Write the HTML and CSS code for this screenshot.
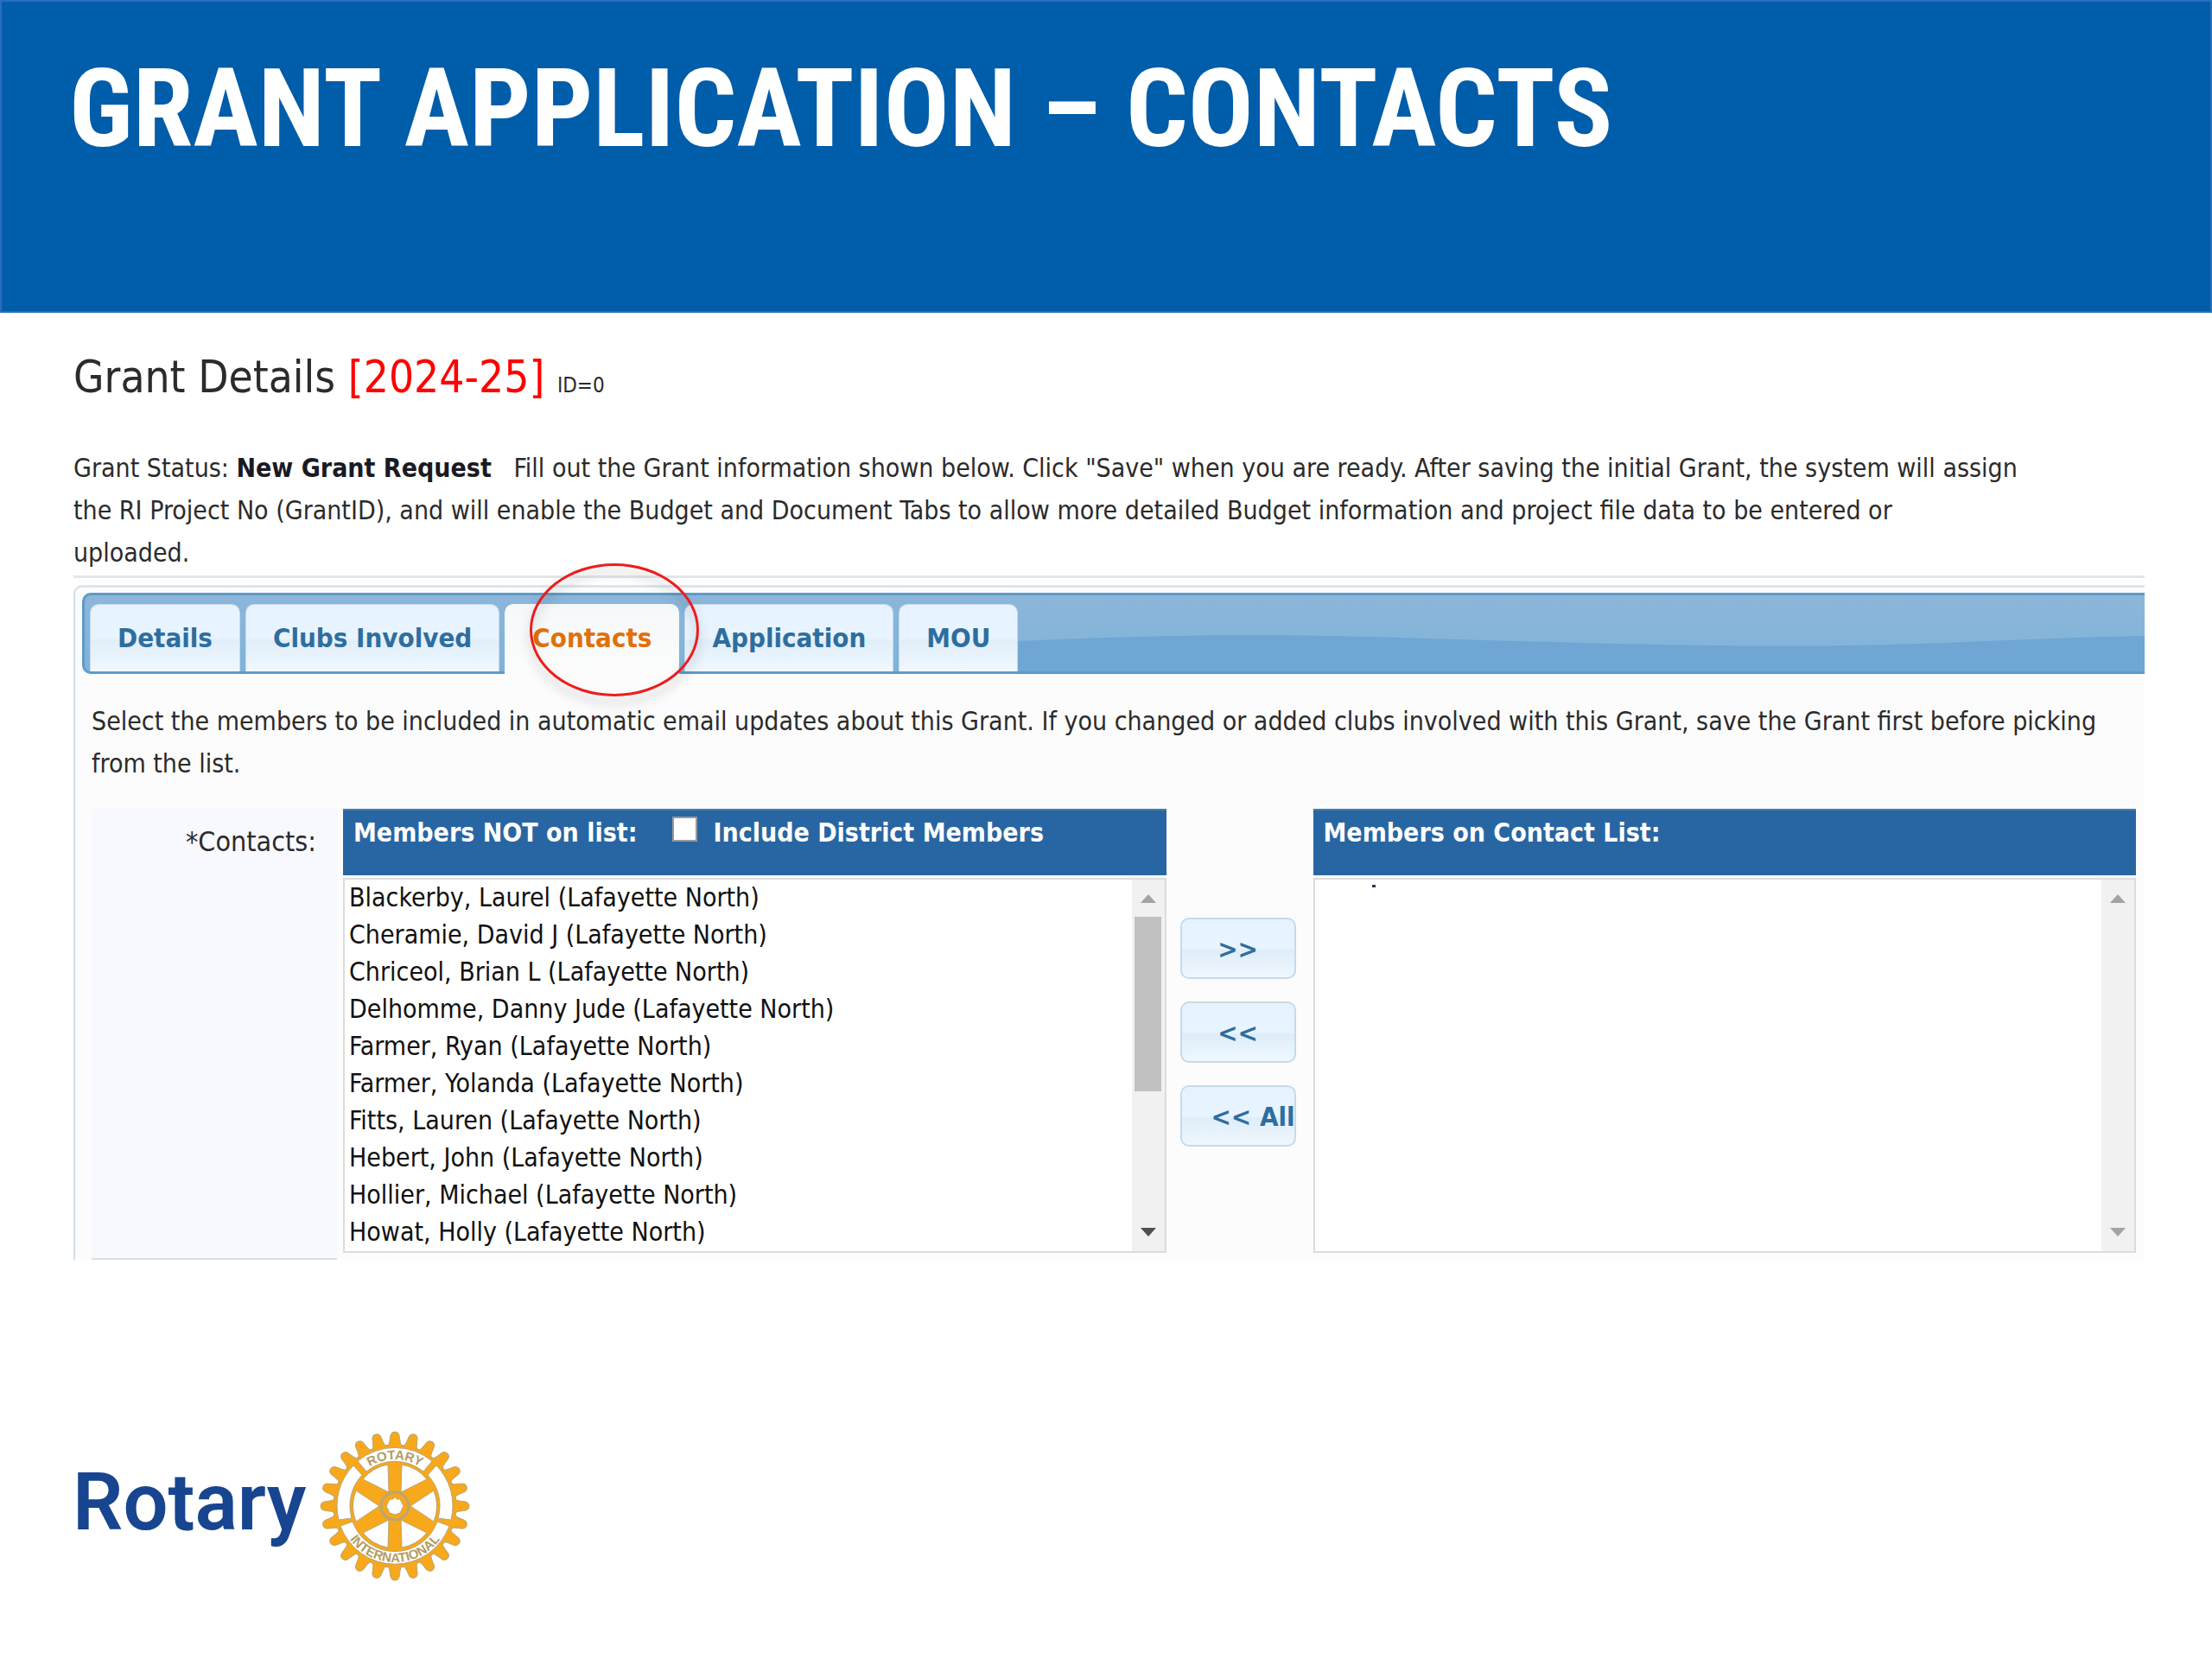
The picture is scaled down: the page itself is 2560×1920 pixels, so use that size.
FILE: index.html
```html
<!DOCTYPE html>
<html lang="en">
<head>
    <meta charset="UTF-8">
    <title>Grant Application - Contacts</title>
    <link rel="stylesheet" href="styles.css">
</head>
<body>
    <header class="banner">
        <h1>GRANT APPLICATION – CONTACTS</h1>
    </header>

    <main class="content">
        <h2>Grant Details <span class="year">[2024-25]</span> <small>ID=0</small></h2>
        <p class="status">
            Grant Status: <b>New Grant Request</b> &nbsp; Fill out the Grant information shown below. Click "Save" when you are ready. After saving the initial Grant, the system will assign<br>
            the RI Project No (GrantID), and will enable the Budget and Document Tabs to allow more detailed Budget information and project file data to be entered or<br>
            uploaded.
        </p>

        <section class="panel">
            <nav class="tabs">
                <svg class="wave" viewBox="0 0 1432 90" preserveAspectRatio="none" aria-hidden="true">
                    <path d="M0 60 C130 54 260 47 400 47 C560 47 760 59 1010 60 C1180 60 1300 50 1432 48 V90 H0 Z" fill="#6fa6d4"/>
                </svg>
                <a href="#details">Details</a>
                <a href="#clubs">Clubs Involved</a>
                <a href="#contacts" class="active">Contacts<span class="ring"></span></a>
                <a href="#application">Application</a>
                <a href="#mou">MOU</a>
            </nav>

            <p class="hint">Select the members to be included in automatic email updates about this Grant. If you changed or added clubs involved with this Grant, save the Grant first before picking from the list.</p>

            <div class="contacts-row">
                <label class="row-label" for="available">*Contacts:</label>

                <div class="list-box">
                    <div class="list-head">
                        <span>Members NOT on list:</span>
                        <input type="checkbox" id="district">
                        <label for="district">Include District Members</label>
                    </div>
                    <div class="list-body">
                        <select id="available" multiple size="10">
                            <option>Blackerby, Laurel (Lafayette North)</option>
                            <option>Cheramie, David J (Lafayette North)</option>
                            <option>Chriceol, Brian L (Lafayette North)</option>
                            <option>Delhomme, Danny Jude (Lafayette North)</option>
                            <option>Farmer, Ryan (Lafayette North)</option>
                            <option>Farmer, Yolanda (Lafayette North)</option>
                            <option>Fitts, Lauren (Lafayette North)</option>
                            <option>Hebert, John (Lafayette North)</option>
                            <option>Hollier, Michael (Lafayette North)</option>
                            <option>Howat, Holly (Lafayette North)</option>
                        </select>
                        <div class="scrollbar">
                            <i class="arrow-up"></i>
                            <i class="thumb"></i>
                            <i class="arrow-down"></i>
                        </div>
                    </div>
                </div>

                <div class="move-buttons">
                    <button type="button">&gt;&gt;</button>
                    <button type="button">&lt;&lt;</button>
                    <button type="button" class="all">&lt;&lt; All</button>
                </div>

                <div class="list-box">
                    <div class="list-head">
                        <label for="selected">Members on Contact List:</label>
                    </div>
                    <div class="list-body">
                        <select id="selected" class="selected" multiple size="10"></select>
                        <div class="scrollbar disabled">
                            <i class="arrow-up"></i>
                            <i class="arrow-down"></i>
                        </div>
                    </div>
                </div>
            </div>
        </section>
    </main>

    <footer class="brand">
        <span class="wordmark">Rotary</span>
        <svg class="wheel" viewBox="-90 -90 180 180" role="img" aria-label="Rotary International">
            <defs>
                <path id="tooth" d="M-9 -68 C-6 -71 -6 -76 -5 -82 Q-4 -86 0 -86 Q4 -86 5 -82 C6 -76 6 -71 9 -68 Z"/>
                <g id="quarter">
                    <use href="#tooth"/>
                    <use href="#tooth" transform="rotate(15)"/>
                    <use href="#tooth" transform="rotate(30)"/>
                    <use href="#tooth" transform="rotate(45)"/>
                    <use href="#tooth" transform="rotate(60)"/>
                    <use href="#tooth" transform="rotate(75)"/>
                </g>
                <path id="topText" d="M-54 0 A54 54 0 0 1 54 0"/>
                <path id="bottomText" d="M-65 0 A65 65 0 0 0 65 0"/>
            </defs>
            <g fill="#f7a81b" stroke="#b9a574" stroke-width="1">
                <circle r="71"/>
                <use href="#quarter"/>
                <use href="#quarter" transform="rotate(90)"/>
                <use href="#quarter" transform="rotate(180)"/>
                <use href="#quarter" transform="rotate(270)"/>
                <circle r="70" stroke="none"/>
            </g>
            <g fill="#fff" stroke="#b9a574" stroke-width="1">
                <path d="M-43 -52 A67 67 0 0 1 43 -52 L33 -40 A52 52 0 0 0 -33 -40 Z"/>
                <path d="M48 -47 A67 67 0 0 1 65 16 L50 14 A52 52 0 0 0 38 -36 Z"/>
                <path d="M-48 -47 A67 67 0 0 0 -65 16 L-50 14 A52 52 0 0 1 -38 -36 Z"/>
                <path d="M-63 23 A67 67 0 0 0 63 23 L49 18 A52 52 0 0 1 -49 18 Z"/>
                <path d="M8 -48 A48 48 0 0 1 37 -31 L7 -16 Z"/>
                <path d="M-8 -48 A48 48 0 0 0 -37 -31 L-7 -16 Z"/>
                <path d="M45 -18 A48 48 0 0 1 45 18 L18 0 Z"/>
                <path d="M-45 -18 A48 48 0 0 0 -45 18 L-18 0 Z"/>
                <path d="M8 48 A48 48 0 0 0 37 31 L7 16 Z"/>
                <path d="M-8 48 A48 48 0 0 1 -37 31 L-7 16 Z"/>
            </g>
            <circle r="16" fill="#f7a81b" stroke="#b9a574" stroke-width="3"/>
            <path d="M-6 -8 L-2 -8 L0 -11 L2 -8 L6 -8 L10 0 L6 8 L0 10 L-6 8 L-10 0 Z" fill="#fff" stroke="#b9a574"/>
            <g class="wheel-text">
                <text><textPath href="#topText" startOffset="50%">ROTARY</textPath></text>
                <text><textPath href="#bottomText" startOffset="50%">INTERNATIONAL</textPath></text>
            </g>
        </svg>
    </footer>
</body>
</html>
```
FILE: styles.css
```css
* {
    box-sizing: border-box;
}
body {
    margin: 0;
    background: #fff;
    color: #2b2b2b;
    font: 30px/49px "DejaVu Sans Condensed", "DejaVu Sans", sans-serif;
}
.banner {
    height: 362px;
    padding: 50px 78px;
    background: #005daa;
    border: 2px solid #2a6ebb;
}
.banner h1 {
    margin: 0;
    color: #fff;
    font: bold 126px/148px "Roboto Condensed", "Liberation Sans", sans-serif;
}
.content {
    margin: 0 78px 0 85px;
}
h2 {
    margin: 0;
    padding-top: 44px;
    font-size: 51px;
    line-height: 62px;
    font-weight: normal;
}
h2 .year {
    color: #f00;
}
h2 small {
    font-size: 24px;
}
.status {
    margin: 40px 0 0;
    padding-bottom: 2px;
    border-bottom: 3px solid #e4e6e8;
}
.status b {
    color: #1a1a24;
}
.panel {
    margin-top: 8px;
    padding: 6px 0 0 8px;
    border-top: 3px solid #dbe6ee;
    border-left: 2px solid #cfe0ec;
    border-top-left-radius: 10px;
    background: #fcfcfc;
}

/* tab bar */
.tabs {
    position: relative;
    display: flex;
    gap: 6px;
    height: 94px;
    padding: 10px 0 0 6px;
    border: 3px solid #5c9ccc;
    border-right: 0;
    border-radius: 10px 0 0 10px;
    background: linear-gradient(#8cb6d9, #7fb3da);
}
.wave {
    position: absolute;
    top: 0;
    right: 0;
    width: 60%;
    height: 88px;
}
.tabs a {
    position: relative;
    height: 78px;
    padding: 0 31px;
    border: 1px solid #c5dbec;
    border-bottom: 0;
    border-radius: 10px 10px 0 0;
    background: linear-gradient(#e6f2fd 0%, #e8f4ff 50%, #e0eefa 54%, #f1f8fe 100%);
    color: #2e6e9e;
    font-size: 31px;
    font-weight: bold;
    line-height: 76px;
    text-decoration: none;
}
.tabs a.active {
    height: 81px;
    border-color: #f5f8f9;
    background: linear-gradient(#f5f8f9, #fcfcfc);
    color: #e17009;
}
.ring {
    position: absolute;
    z-index: 1;
    left: 28px;
    top: -48px;
    width: 196px;
    height: 154px;
    border: 3px solid #ee1c1c;
    border-radius: 50%;
    filter: drop-shadow(0 8px 6px rgba(0, 0, 0, 0.25));
}
/* keep the ring above the tab that follows it */
.tabs a.active {
    z-index: 1;
}

.hint {
    margin: 0;
    padding: 30px 40px 0 11px;
}

/* member lists */
.contacts-row {
    display: flex;
    align-items: flex-start;
    margin-top: 28px;
    padding: 0 10px 0 11px;
}
.row-label {
    align-self: stretch;
    width: 284px;
    margin-right: 7px;
    padding: 14px 24px 0 0;
    border-bottom: 2px solid #dddfe2;
    background: #f8f9fe;
    font-size: 32px;
    text-align: right;
}
.list-box {
    flex: 1;
    min-width: 0;
    margin-bottom: 8px;
}
.list-head {
    display: flex;
    height: 77px;
    padding-left: 12px;
    background: #2866a3;
    border-top: 2px solid #4d7ca8;
    color: #fff;
    font-weight: bold;
    line-height: 52px;
}
.list-head input {
    appearance: none;
    width: 29px;
    height: 29px;
    margin: 7px 18px 0 41px;
    border: 2px solid #999;
    background: #fff;
}
.list-body {
    display: flex;
    height: 434px;
    margin-top: 3px;
    border: 2px solid #dcdcdc;
    background: #fff;
}
.list-body select {
    flex: 1;
    min-width: 0;
    padding: 3px 0 0;
    border: 0;
    outline: 0;
    overflow: hidden;
    background: #fff;
    color: #111;
    font: inherit;
}
.list-body option {
    min-height: 43px;
    padding: 0 5px;
    line-height: 43px;
}
.list-body .selected {
    background: linear-gradient(#335, #335) 66px 6px / 4px 3px no-repeat #fff;
}
.scrollbar {
    display: flex;
    flex-direction: column;
    align-items: center;
    width: 38px;
    padding: 17px 0;
    background: #f1f1f1;
}
.arrow-up, .arrow-down {
    border: 9px solid transparent;
}
.arrow-up {
    border-top: 0;
    border-bottom: 10px solid #a3a3a3;
}
.arrow-down {
    margin-top: auto;
    border-bottom: 0;
    border-top: 10px solid #505050;
}
.disabled .arrow-down {
    border-top-color: #a3a3a3;
}
.thumb {
    width: 31px;
    height: 202px;
    margin-top: 16px;
    background: #c1c1c1;
}

.move-buttons {
    display: flex;
    flex-direction: column;
    gap: 26px;
    margin: 126px 20px 0 16px;
}
.move-buttons button {
    width: 134px;
    height: 71px;
    padding: 0;
    overflow: hidden;
    border: 2px solid #c5dbec;
    border-radius: 10px;
    background: linear-gradient(#e6f2fd 0%, #e8f4ff 50%, #dfedf9 54%, #eff7fe 100%);
    color: #2e6e9e;
    font: bold 31px/40px "DejaVu Sans Condensed", "DejaVu Sans", sans-serif;
    white-space: nowrap;
}
.move-buttons .all {
    padding-left: 34px;
    text-align: left;
}

/* logo */
.brand {
    display: flex;
    align-items: center;
    gap: 13px;
    margin: 195px 0 0 84px;
}
.wordmark {
    padding-bottom: 8px;
    color: #17458f;
    font: 600 92px/106px "Roboto", "Liberation Sans", sans-serif;
}
.wheel {
    width: 180px;
    height: 180px;
}
.wheel-text {
    fill: #b39c62;
    font: bold 15px "Liberation Sans", sans-serif;
    text-anchor: middle;
}
```
